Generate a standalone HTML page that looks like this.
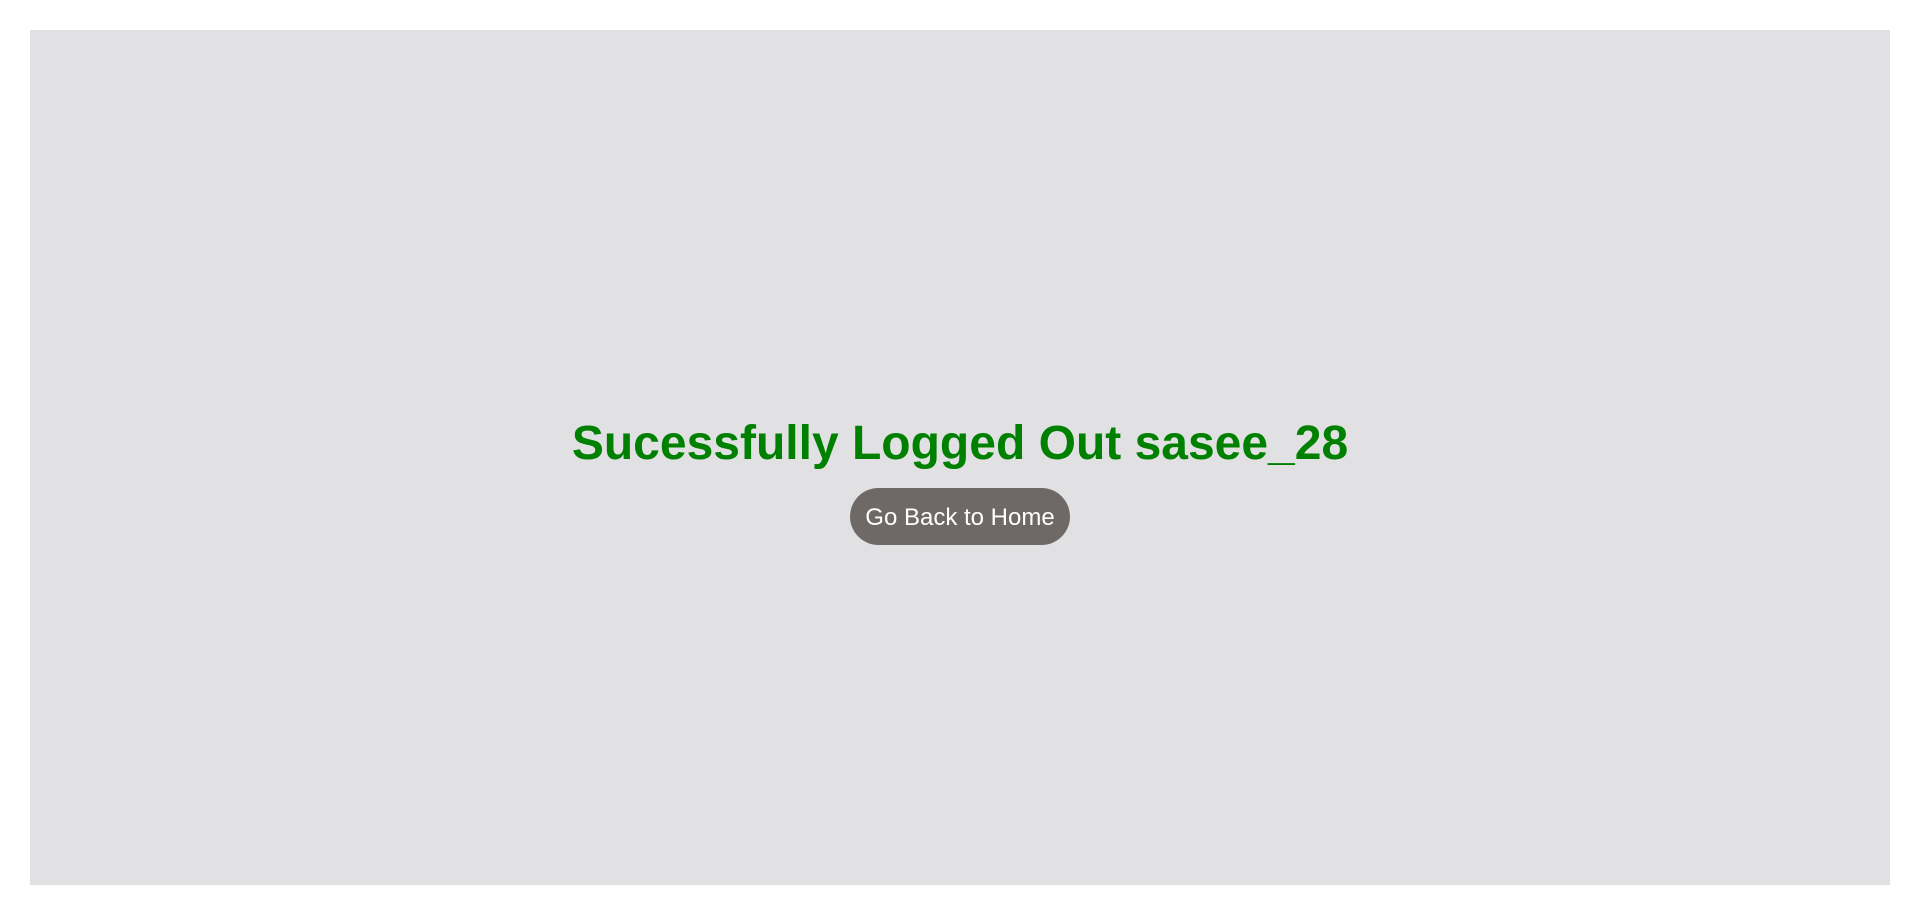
<!DOCTYPE html>
<html><head><style>
html,body{margin:0;padding:0;background:#fff;width:1920px;height:915px;overflow:hidden}
.box{position:absolute;left:30px;top:30px;width:1860px;height:855px;background:#e1e1e3}
h1{position:absolute;left:0;width:1920px;top:420px;margin:0;text-align:center;font:bold 48px/48px "Liberation Sans",Arial,sans-serif;color:#008000}
.btn{position:absolute;left:850px;top:488px;width:220px;height:57px;border-radius:29px;background:#6e6867;color:#fff;text-align:center;font:24px/59px "Liberation Sans",Arial,sans-serif}
</style></head><body>
<div class="box"></div>
<h1>Sucessfully Logged Out sasee_28</h1>
<div class="btn">Go Back to Home</div>
</body></html>
